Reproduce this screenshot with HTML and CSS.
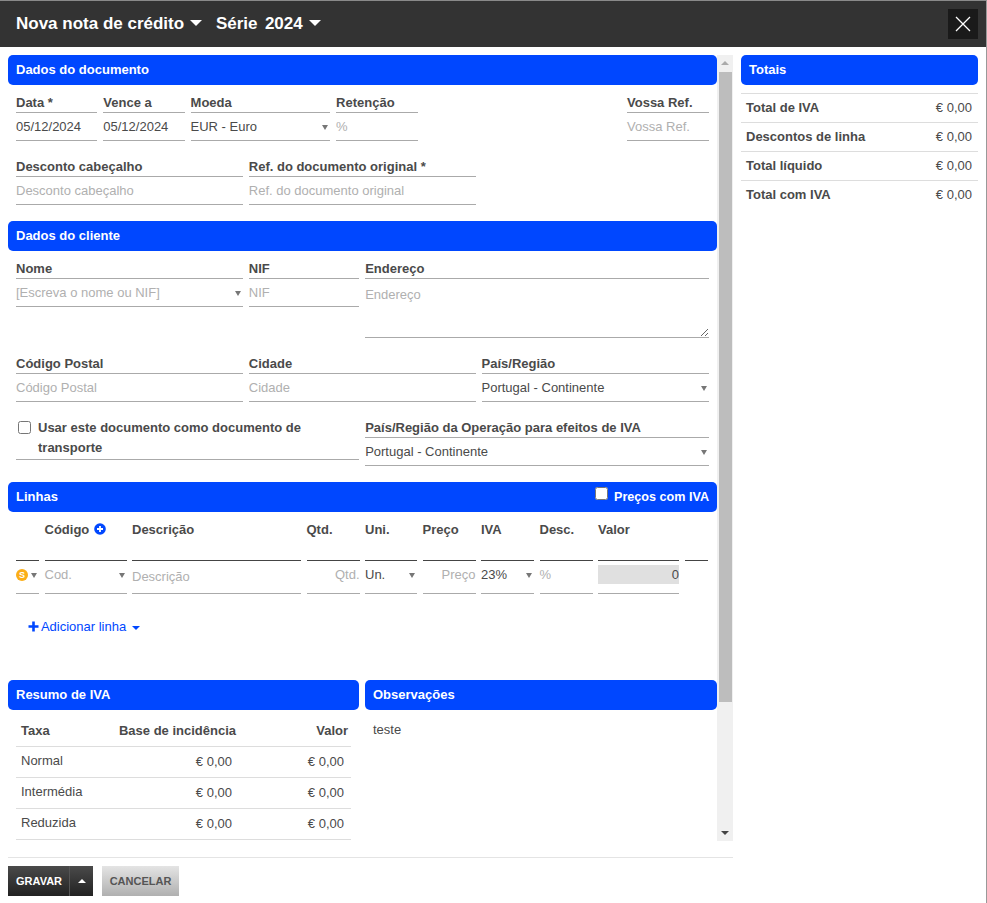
FILE: index.html
```html
<!DOCTYPE html>
<html lang="pt">
<head>
<meta charset="utf-8">
<title>Nova nota de crédito</title>
<link rel="stylesheet" href="styles.css">
</head>
<body>
<div class="modal">
  <header class="titlebar">
    <span class="title">Nova nota de crédito <i class="caret caret-title"></i></span>
    <span class="title title-serie">Série&nbsp; 2024 <i class="caret caret-title"></i></span>
    <button class="close" aria-label="Fechar">
      <svg width="16" height="16" viewBox="0 0 16 16"><path d="M1 1 L15 15 M15 1 L1 15" stroke="#fff" stroke-width="1.3" fill="none"/></svg>
    </button>
  </header>
  <div class="main">
    <div class="leftcol">
      <div class="scrollarea">
        <div class="content">
          <div class="band"><span>Dados do documento</span></div>
          <div class="form">
            <div class="field s3"><div class="lbl">Data *</div><div class="val">05/12/2024</div></div>
            <div class="field s3"><div class="lbl">Vence a</div><div class="val">05/12/2024</div></div>
            <div class="field s5"><div class="lbl">Moeda</div><div class="val sel">EUR - Euro<i class="arrow"></i></div></div>
            <div class="field s3"><div class="lbl">Retenção</div><div class="val ph">%</div></div>
            <div class="field s3 c22"><div class="lbl">Vossa Ref.</div><div class="val ph">Vossa Ref.</div></div>
            <div class="field s8"><div class="lbl">Desconto cabeçalho</div><div class="val ph">Desconto cabeçalho</div></div>
            <div class="field s8"><div class="lbl">Ref. do documento original *</div><div class="val ph">Ref. do documento original</div></div>
          </div>

          <div class="band"><span>Dados do cliente</span></div>
          <div class="form">
            <div class="field s8"><div class="lbl">Nome</div><div class="val ph sel">[Escreva o nome ou NIF]<i class="arrow"></i></div></div>
            <div class="field s4"><div class="lbl">NIF</div><div class="val ph">NIF</div></div>
            <div class="field s12"><div class="lbl">Endereço</div><div class="area ph">Endereço</div></div>
            <div class="field s8"><div class="lbl">Código Postal</div><div class="val ph">Código Postal</div></div>
            <div class="field s8"><div class="lbl">Cidade</div><div class="val ph">Cidade</div></div>
            <div class="field s8"><div class="lbl">País/Região</div><div class="val sel">Portugal - Continente<i class="arrow"></i></div></div>
            <label class="field s12 transport"><input type="checkbox" class="check"><span>Usar este documento como documento de transporte</span></label>
            <div class="field s12"><div class="lbl">País/Região da Operação para efeitos de IVA</div><div class="val sel">Portugal - Continente<i class="arrow"></i></div></div>
          </div>

          <div class="band band-lines"><span>Linhas</span><label class="vat-toggle"><input type="checkbox" class="check"><span>Preços com IVA</span></label></div>
          <div class="lines">
            <div class="th"></div>
            <div class="th">Código <svg class="addcode" width="12" height="12" viewBox="0 0 12 12"><circle cx="6" cy="6" r="5.8" fill="#0047ff"/><path d="M6 3 V9 M3 6 H9" stroke="#fff" stroke-width="1.8"/></svg></div>
            <div class="th">Descrição</div>
            <div class="th">Qtd.</div>
            <div class="th">Uni.</div>
            <div class="th">Preço</div>
            <div class="th">IVA</div>
            <div class="th">Desc.</div>
            <div class="th">Valor</div>
            <div class="th"></div>

            <div class="td sel"><span class="coin">S</span><i class="arrow"></i></div>
            <div class="td sel ph">Cod.<i class="arrow"></i></div>
            <div class="td ph td-desc">Descrição</div>
            <div class="td ph right">Qtd.</div>
            <div class="td sel">Un.<i class="arrow"></i></div>
            <div class="td ph right">Preço</div>
            <div class="td sel">23%<i class="arrow"></i></div>
            <div class="td ph">%</div>
            <div class="td td-total"><span>0</span></div>
            <div></div>
          </div>
          <div class="addline"><svg width="11" height="11" viewBox="0 0 11 11"><path d="M5.5 0.5 V10.5 M0.5 5.5 H10.5" stroke="#0047ff" stroke-width="2.6"/></svg> Adicionar linha <i class="caret caret-blue"></i></div>

          <div class="bottom">
            <section class="vat">
              <div class="band"><span>Resumo de IVA</span></div>
              <table class="vat-table">
                <thead><tr><th>Taxa</th><th class="r">Base de incidência</th><th class="r">Valor</th></tr></thead>
                <tbody>
                  <tr><td class="rate">Normal</td><td class="r">€ 0,00</td><td class="r">€ 0,00</td></tr>
                  <tr><td class="rate">Intermédia</td><td class="r">€ 0,00</td><td class="r">€ 0,00</td></tr>
                  <tr><td class="rate">Reduzida</td><td class="r">€ 0,00</td><td class="r">€ 0,00</td></tr>
                </tbody>
              </table>
            </section>
            <section class="notes">
              <div class="band"><span>Observações</span></div>
              <p class="note-text">teste</p>
            </section>
          </div>
        </div>
        <div class="scrollbar">
          <i class="sb-up"></i>
          <div class="sb-thumb"></div>
          <i class="sb-down"></i>
        </div>
      </div>
      <footer class="actions">
        <div class="btn-save"><span class="btn-save-main">GRAVAR</span><span class="btn-save-more"><i class="caret caret-up"></i></span></div>
        <div class="btn-cancel">CANCELAR</div>
      </footer>
    </div>
    <aside class="rightcol">
      <div class="band"><span>Totais</span></div>
      <div class="totals">
        <div class="tot-row"><b>Total de IVA</b><span>€ 0,00</span></div>
        <div class="tot-row"><b>Descontos de linha</b><span>€ 0,00</span></div>
        <div class="tot-row"><b>Total líquido</b><span>€ 0,00</span></div>
        <div class="tot-row"><b>Total com IVA</b><span>€ 0,00</span></div>
      </div>
    </aside>
  </div>
</div>
</body>
</html>
```
FILE: styles.css
```css
* { box-sizing: border-box; }
html, body { margin: 0; padding: 0; height: 100%; background: #fff; }
body { font-family: "Liberation Sans", Arial, sans-serif; font-size: 13px; color: #4a4a4a; overflow: hidden; }

.modal { height: 903px; border-top: 1px solid #8a8a8a; border-right: 1px solid #999; display: flex; flex-direction: column; }

.titlebar { height: 46px; background: #333; display: flex; align-items: center; padding: 0 8px 0 16px; flex: none; }
.title { color: #fff; font-weight: bold; font-size: 17px; white-space: nowrap; }
.title-serie { margin-left: 14px; word-spacing: -1px; }
.title-serie .caret-title { margin-left: 3px; }
.close { margin-left: auto; width: 30px; height: 30px; background: #1a1a1a; border: 0; padding: 0; display: flex; align-items: center; justify-content: center; }

.caret { display: inline-block; width: 0; height: 0; border-left: 6px solid transparent; border-right: 6px solid transparent; border-top: 6px solid #fff; vertical-align: middle; }
.caret-title { margin-left: 1px; margin-top: -3px; }
.caret-blue { border-left-width: 4px; border-right-width: 4px; border-top: 4px solid #0047ff; margin-left: 2px; }
.caret-up { border-left-width: 4px; border-right-width: 4px; border-top: 0; border-bottom: 4px solid #fff; }

.main { flex: 1; display: flex; gap: 8px; padding: 8px 8px 0 8px; min-height: 0; }
.leftcol { width: 725px; flex: none; }
.rightcol { width: 237px; flex: none; }

.scrollarea { height: 786px; display: flex; }
.content { width: 709px; flex: none; }

.band { height: 30px; background: #0047ff; border-radius: 5px; color: #fff; font-weight: bold; font-size: 13px; line-height: 30px; padding: 0 8px; display: flex; justify-content: space-between; }
.band-lines { align-items: center; }

.form { display: grid; grid-template-columns: repeat(24, 1fr); column-gap: 5.8px; row-gap: 15px; padding: 7px 8.5px 16px 8px; align-items: start; }
.s3 { grid-column: span 3; }
.s4 { grid-column: span 4; }
.s5 { grid-column: span 5; }
.s8 { grid-column: span 8; }
.s12 { grid-column: span 12; }
.c22 { grid-column: 22 / span 3; }

.lbl { height: 21px; line-height: 22px; border-bottom: 1px solid #aaa; font-weight: bold; font-size: 13px; color: #4a4a4a; white-space: nowrap; }
.val { height: 28px; line-height: 28px; border-bottom: 1px solid #aaa; font-size: 13px; color: #4a4a4a; position: relative; white-space: nowrap; }
.val.ph, .ph { color: #b0b0b0; }
.sel { position: relative; }
.arrow { position: absolute; right: 2px; top: 50%; margin-top: -2px; width: 0; height: 0; border-left: 3px solid transparent; border-right: 3px solid transparent; border-top: 5px solid #777; }
.area { height: 59px; padding-top: 8px; line-height: 16px; border-bottom: 1px solid #aaa; font-size: 13px; resize: both; overflow: hidden; }

.transport { display: flex; align-items: flex-start; height: 43px; padding-left: 2px; border-bottom: 1px solid #aaa; font-weight: bold; font-size: 13px; line-height: 20px; padding-top: 1px; }
.check { width: 13px; height: 13px; margin: 0; flex: none; }
.transport .check { margin: 3px 7px 0 0; }

.vat-toggle { display: flex; align-items: center; font-size: 12.6px; }
.vat-toggle .check { margin: -7px 6px 0 0; }

.lines { display: grid; grid-template-columns: 23px 82px 169px 53px 52px 53px 53px 53px 81px 23px; column-gap: 5.5px; padding: 0 8px; }
.th { height: 49px; padding-top: 10px; line-height: 16px; border-bottom: 1px solid #444; font-weight: bold; font-size: 13px; color: #4a4a4a; white-space: nowrap; }
.addcode { vertical-align: -1px; margin-left: 1px; }
.td { height: 33px; line-height: 28px; border-bottom: 1px solid #aaa; font-size: 13px; position: relative; white-space: nowrap; }
.td .arrow { top: 14px; }
.td-desc { line-height: 31px; }
.right { text-align: right; }
.td-total span { display: block; background: #e0e0e0; height: 19px; margin-top: 4px; line-height: 19px; text-align: right; }
.coin { position: absolute; left: 0; top: 8px; width: 12px; height: 12px; border-radius: 50%; background: #fbae17; color: #fff; font-size: 9px; font-weight: bold; line-height: 12px; text-align: center; }

.addline { margin: 24px 0 0 20px; height: 18px; line-height: 18px; font-size: 13px; color: #0047ff; white-space: nowrap; }
.addline svg { vertical-align: -1px; margin-right: -1px; }

.bottom { display: flex; gap: 6px; margin-top: 44px; }
.vat { width: 351px; flex: none; }
.notes { flex: 1; }
.vat-table { width: 335px; margin: 6px 0 0 8px; border-collapse: collapse; font-size: 13px; table-layout: fixed; }
.vat-table th { font-size: 13px; font-weight: bold; height: 30px; text-align: left; padding: 0 3px 0 5px; border-bottom: 1px solid #ddd; color: #4a4a4a; }
.vat-table th.r { text-align: right; }
.vat-table td { height: 31px; padding: 0 7px 0 5px; border-bottom: 1px solid #ddd; }
.vat-table td.r { text-align: right; }
.vat-table td.rate { padding-bottom: 2px; }
.vat-table th:nth-child(1) { width: 90px; }
.vat-table th:nth-child(2) { width: 133px; }
.note-text { margin: 0; padding: 12px 8px 0; line-height: 16px; font-size: 13px; }

.scrollbar { width: 16px; flex: none; background: #f0f0f0; position: relative; padding: 17px 1px 0 2px; }
.sb-thumb { height: 630px; background: #bdbdbd; }
.sb-up, .sb-down { position: absolute; left: 4px; width: 0; height: 0; border-left: 4px solid transparent; border-right: 4px solid transparent; }
.sb-up { top: 6px; border-bottom: 4px solid #aaa; }
.sb-down { bottom: 6px; border-top: 4px solid #444; }

.actions { margin-top: 16px; border-top: 1px solid #e4e4e4; padding-top: 8px; display: flex; gap: 9px; }
.btn-save { display: flex; height: 30px; width: 85px; background: linear-gradient(#4a4a4a, #222); color: #fff; font-weight: bold; font-size: 11px; line-height: 30px; }
.btn-save-main { width: 62px; padding-left: 8px; border-right: 1px solid #555; }
.btn-save-more { flex: 1; display: flex; align-items: center; justify-content: center; }
.btn-cancel { width: 77px; height: 30px; background: linear-gradient(#e4e4e4, #b0b0b0); color: #555; font-weight: bold; font-size: 11px; line-height: 30px; text-align: center; }

.totals { margin-top: 8px; border-top: 1px solid #ddd; }
.tot-row { height: 29px; display: flex; justify-content: space-between; align-items: center; padding: 0 6px 1px 5px; font-size: 13px; border-bottom: 1px solid #ddd; }
.tot-row:last-child { border-bottom-color: transparent; }
.tot-row b { font-size: 13px; color: #4a4a4a; }
```
